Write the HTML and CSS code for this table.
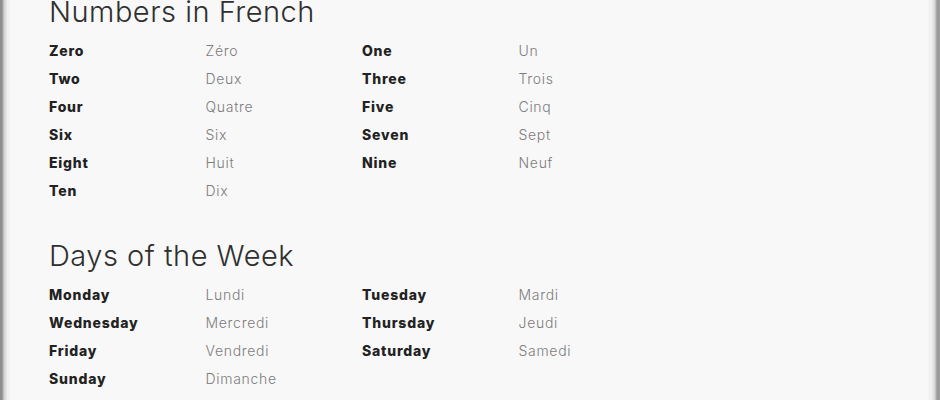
FILE: index.html
```html
<!DOCTYPE html>
<html lang="en">
<head>
<meta charset="utf-8">
<title>Vocabulary</title>
<link rel="stylesheet" href="styles.css">
</head>
<body>
<main class="page">
  <section class="section">
    <h2 class="title">Numbers in French</h2>
    <div class="grid">
      <span class="en">Zero</span><span class="fr">Zéro</span><span class="en">One</span><span class="fr">Un</span>
      <span class="en">Two</span><span class="fr">Deux</span><span class="en">Three</span><span class="fr">Trois</span>
      <span class="en">Four</span><span class="fr">Quatre</span><span class="en">Five</span><span class="fr">Cinq</span>
      <span class="en">Six</span><span class="fr">Six</span><span class="en">Seven</span><span class="fr">Sept</span>
      <span class="en">Eight</span><span class="fr">Huit</span><span class="en">Nine</span><span class="fr">Neuf</span>
      <span class="en">Ten</span><span class="fr">Dix</span>
    </div>
  </section>
  <section class="section">
    <h2 class="title">Days of the Week</h2>
    <div class="grid">
      <span class="en">Monday</span><span class="fr">Lundi</span><span class="en">Tuesday</span><span class="fr">Mardi</span>
      <span class="en">Wednesday</span><span class="fr">Mercredi</span><span class="en">Thursday</span><span class="fr">Jeudi</span>
      <span class="en">Friday</span><span class="fr">Vendredi</span><span class="en">Saturday</span><span class="fr">Samedi</span>
      <span class="en">Sunday</span><span class="fr">Dimanche</span>
    </div>
  </section>
</main>
</body>
</html>
```
FILE: styles.css
```css
html, body {
  margin: 0;
  padding: 0;
  height: 100%;
}
body {
  font-family: Inter, "Liberation Sans", sans-serif;
  overflow: hidden;
  background:
    linear-gradient(to right, #8e8e8e 0, #8e8e8e 2px, #cfcfcf 4px, #ececec 7px, #f8f8f8 11px) left top / 12px 100% repeat-y,
    linear-gradient(to left, #9a9a9a 0, #9a9a9a 3px, #d2d2d2 5px, #ededed 8px, #f8f8f8 13px) right top / 14px 100% repeat-y,
    #f8f8f8;
}
.page {
  padding: 0 49px;
}
.section {
  margin-bottom: 40px;
}
.title {
  margin: 0 0 12px;
  font-size: 29px;
  font-weight: 300;
  letter-spacing: 0.5px;
  color: #2f2f2f;
  line-height: 24px;
}
.grid {
  display: grid;
  grid-template-columns: repeat(4, 156.5px);
  grid-auto-rows: 28px;
  align-items: center;
  font-size: 14px;
}
.en {
  font-weight: 800;
  letter-spacing: 0.8px;
  color: #222;
}
.fr {
  font-weight: 300;
  letter-spacing: 0.7px;
  color: #7c7c7c;
}
```
